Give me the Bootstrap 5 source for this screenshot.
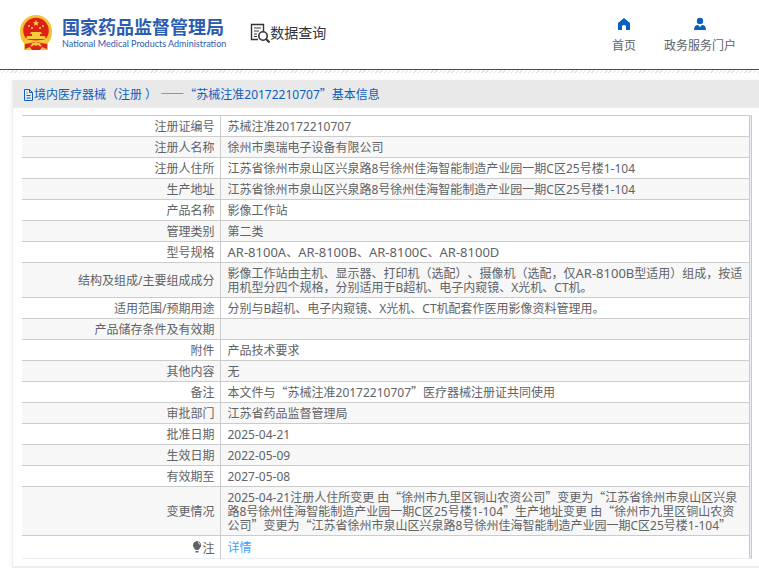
<!DOCTYPE html>
<html lang="zh-CN">
<head>
<meta charset="utf-8">
<meta name="viewport" content="width=device-width, initial-scale=1">
<title>国家药品监督管理局 数据查询</title>
<link rel="stylesheet" href="https://cdn.jsdelivr.net/npm/bootstrap@5.3.0/dist/css/bootstrap.min.css">
<style>
body{font-family:"Noto Sans","Noto Sans CJK SC",sans-serif;font-size:12px;line-height:14px;color:#606266;background:#fff;text-spacing-trim:space-all}
a{text-decoration:none}
.q{font-family:"Noto Sans CJK SC",sans-serif;line-height:1px}
.model{font-size:13px;line-height:1px}
.site-header{height:70px;border-bottom:1px solid #0a5cb0}
.hatch{height:3px;background:repeating-linear-gradient(135deg,#e2e2e2 0 1px,#fff 1px 3px)}
.site-logo{padding-bottom:4px}
.brand{color:#2b5caf;padding-left:10px}
.brand-cn{font-size:18px;line-height:22px;font-weight:700}
.brand-en{font-family:Lato,sans-serif;font-size:9px;line-height:12px;font-weight:400}
.query{font-size:14px;line-height:20px;color:#33333d}
.top-nav{gap:28px;padding-right:23px}
.top-nav a{color:#606266}
.panel{margin:7px 0 0 12px;border:1px solid #ebeef5;border-width:0 0 2px 1px;box-shadow:0 1px 6px rgba(0,0,0,.06)}
.panel-title{height:28px;font-size:12px;line-height:14px;color:#0b5fc0;background:#e9e9e9;border-bottom:1px solid #ebeef5;padding:2px 0 0 10px}
.info-wrap{padding:7px 7px 7px 9px}
.info-frame{border-right:1px solid #c8c9cc;padding-right:1px;background:#ebeef5}
.info{border-collapse:collapse;table-layout:fixed;background:#fff;color:inherit;border-right:1px solid #c8c9cc}
.info th,.info td{padding:4px 5px 2px 7px;border-top:1px solid #ccc;vertical-align:middle;line-height:14px;height:21px}
.info th{width:198px;font-weight:400;text-align:right;border-right:1px solid #ccc}
.info tr:nth-child(even){background:#f7f7f7}
.info tr:last-child{background:#fff;border-bottom:1px solid #ebeef5}
.info tr:last-child>*{height:23px}
.info a{color:#409eff}
</style>
<script src="https://cdn.jsdelivr.net/npm/bootstrap@5.3.0/dist/js/bootstrap.bundle.min.js"></script>
</head>
<body class="overflow-x-hidden">
<header class="site-header d-flex align-items-center justify-content-between">
  <div class="site-logo d-flex align-items-center ps-3 ms-1">
    <svg width="32" height="36" viewBox="0 0 32 36" aria-hidden="true">
      <path d="M16 0C25 0 32 7 32 16c0 7-2 10-4 12v7H4v-7C2 26 0 23 0 16 0 7 7 0 16 0z" fill="#f3c437"/>
      <path d="M5 29l6-1 5 3 5-3 6 1v5l-5-2-2 3h-8l-2-3-5 2z" fill="#d9241c"/>
      <circle cx="16" cy="15.500" r="12.800" fill="#df2018"/>
      <path d="M16 5l.9 2.200h2.300l-1.800 1.500.7 2.300-2.100-1.400-2.100 1.400.7-2.300-1.800-1.500h2.300z" fill="#fbd43c"/>
      <g fill="#fbd43c"><circle cx="9" cy="11" r="1"/><circle cx="12" cy="13" r="1"/><circle cx="20" cy="13" r="1"/><circle cx="23" cy="11" r="1"/></g>
      <path d="M11 17h10l1 2h-2v2h5l1 3H6l1-3h5v-2h-2z" fill="#f7ca38"/>
      <path d="M5 25q11 3 22 0M11 31q5-5 10 0" fill="none" stroke="#f7ca38" stroke-width="2"/>
    </svg>
    <div class="brand">
      <div class="brand-cn text-nowrap">国家药品监督管理局</div>
      <div class="brand-en text-nowrap">National Medical Products Administration</div>
    </div>
    <div class="query d-flex align-items-center ms-4 text-nowrap">
      <svg width="20" height="20" viewBox="0 0 20 20" fill="none" stroke="#33333d" aria-hidden="true"><path d="M8 16.500H1.500V1.500h12V8" stroke-width="1.400"/><path d="M4 5h7M4 8h5M4 11h3M4 13.500h3" stroke-width="1.200"/><circle cx="13" cy="13" r="4.200" stroke-width="1.600"/><path d="M16 16l3.500 3.500" stroke-width="2"/></svg>
      <span>数据查询</span>
    </div>
  </div>
  <nav class="top-nav d-flex text-nowrap">
    <a href="#" class="d-flex flex-column align-items-center gap-1"><svg width="14" height="14" viewBox="0 0 14 14" aria-hidden="true"><path d="M7 1L1 6v7h4V9q2-2 4 0v4h4V6z" fill="#0b5fc0"/></svg><span class="pt-1">首页</span></a>
    <a href="#" class="d-flex flex-column align-items-center gap-1"><svg width="14" height="14" viewBox="0 0 14 14" aria-hidden="true"><circle cx="7" cy="4" r="3.200" fill="#0b5fc0"/><path d="M1 13q0-5 4-5l2 2 2-2q4 0 4 5z" fill="#0b5fc0"/></svg><span class="pt-1">政务服务门户</span></a>
  </nav>
</header>
<div class="hatch"></div>
<main>
<section class="panel" id="detail">
  <h1 class="panel-title d-flex align-items-center mb-0 fw-normal text-nowrap"><svg width="11" height="12" viewBox="0 0 11 12" fill="none" stroke="#0b5fc0" aria-hidden="true"><path d="M1.500.500h5l3 3v8h-8zM6.500.500v3h3M3.500 4h1M3.500 6.500h4M3.500 9h4"/></svg><span>境内医疗器械（注册 ） <span class="q">——</span><span class="q">“</span>苏械注准20172210707<span class="q">”</span>基本信息</span></h1>
  <div class="info-wrap"><div class="info-frame">
  <table class="info w-100"><tbody>
    <tr><th scope="row">注册证编号</th><td>苏械注准20172210707</td></tr>
    <tr><th scope="row">注册人名称</th><td>徐州市奥瑞电子设备有限公司</td></tr>
    <tr><th scope="row">注册人住所</th><td>江苏省徐州市泉山区兴泉路8号徐州佳海智能制造产业园一期C区25号楼1-104</td></tr>
    <tr><th scope="row">生产地址</th><td>江苏省徐州市泉山区兴泉路8号徐州佳海智能制造产业园一期C区25号楼1-104</td></tr>
    <tr><th scope="row">产品名称</th><td>影像工作站</td></tr>
    <tr><th scope="row">管理类别</th><td>第二类</td></tr>
    <tr><th scope="row">型号规格</th><td><span class="model">AR-8100A</span>、<span class="model">AR-8100B</span>、<span class="model">AR-8100C</span>、<span class="model">AR-8100D</span></td></tr>
    <tr><th scope="row">结构及组成/主要组成成分</th><td>影像工作站由主机、显示器、打印机（选配）、摄像机（选配，仅<span class="model">AR-8100B</span>型适用）组成，按适用机型分四个规格，分别适用于B超机、电子内窥镜、X光机、CT机。</td></tr>
    <tr><th scope="row">适用范围/预期用途</th><td>分别与B超机、电子内窥镜、X光机、CT机配套作医用影像资料管理用。</td></tr>
    <tr><th scope="row">产品储存条件及有效期</th><td></td></tr>
    <tr><th scope="row">附件</th><td>产品技术要求</td></tr>
    <tr><th scope="row">其他内容</th><td>无</td></tr>
    <tr><th scope="row">备注</th><td>本文件与<span class="q">“</span>苏械注准20172210707<span class="q">”</span>医疗器械注册证共同使用</td></tr>
    <tr><th scope="row">审批部门</th><td>江苏省药品监督管理局</td></tr>
    <tr><th scope="row">批准日期</th><td>2025-04-21</td></tr>
    <tr><th scope="row">生效日期</th><td>2022-05-09</td></tr>
    <tr><th scope="row">有效期至</th><td>2027-05-08</td></tr>
    <tr><th scope="row">变更情况</th><td>2025-04-21注册人住所变更 由<span class="q">“</span>徐州市九里区铜山农资公司<span class="q">”</span>变更为<span class="q">“</span>江苏省徐州市泉山区兴泉路8号徐州佳海智能制造产业园一期C区25号楼1-104<span class="q">”</span>生产地址变更 由<span class="q">“</span>徐州市九里区铜山农资公司<span class="q">”</span>变更为<span class="q">“</span>江苏省徐州市泉山区兴泉路8号徐州佳海智能制造产业园一期C区25号楼1-104<span class="q">”</span></td></tr>
    <tr><th scope="row"><svg width="10" height="12" viewBox="0 0 10 12" class="align-baseline" aria-hidden="true"><path d="M5 0a4.200 4.200 0 0 1 3 7L6.500 9h-3L2 7A4.200 4.200 0 0 1 5 0zM3.500 10h3v1.500h-3z" fill="#606266"/><path d="M6 1.500q1.500.5 1.700 2" fill="none" stroke="#fff"/></svg>注</th><td><a href="#">详情</a></td></tr>
  </tbody></table>
  </div></div>
</section>
</main>
</body>
</html>
